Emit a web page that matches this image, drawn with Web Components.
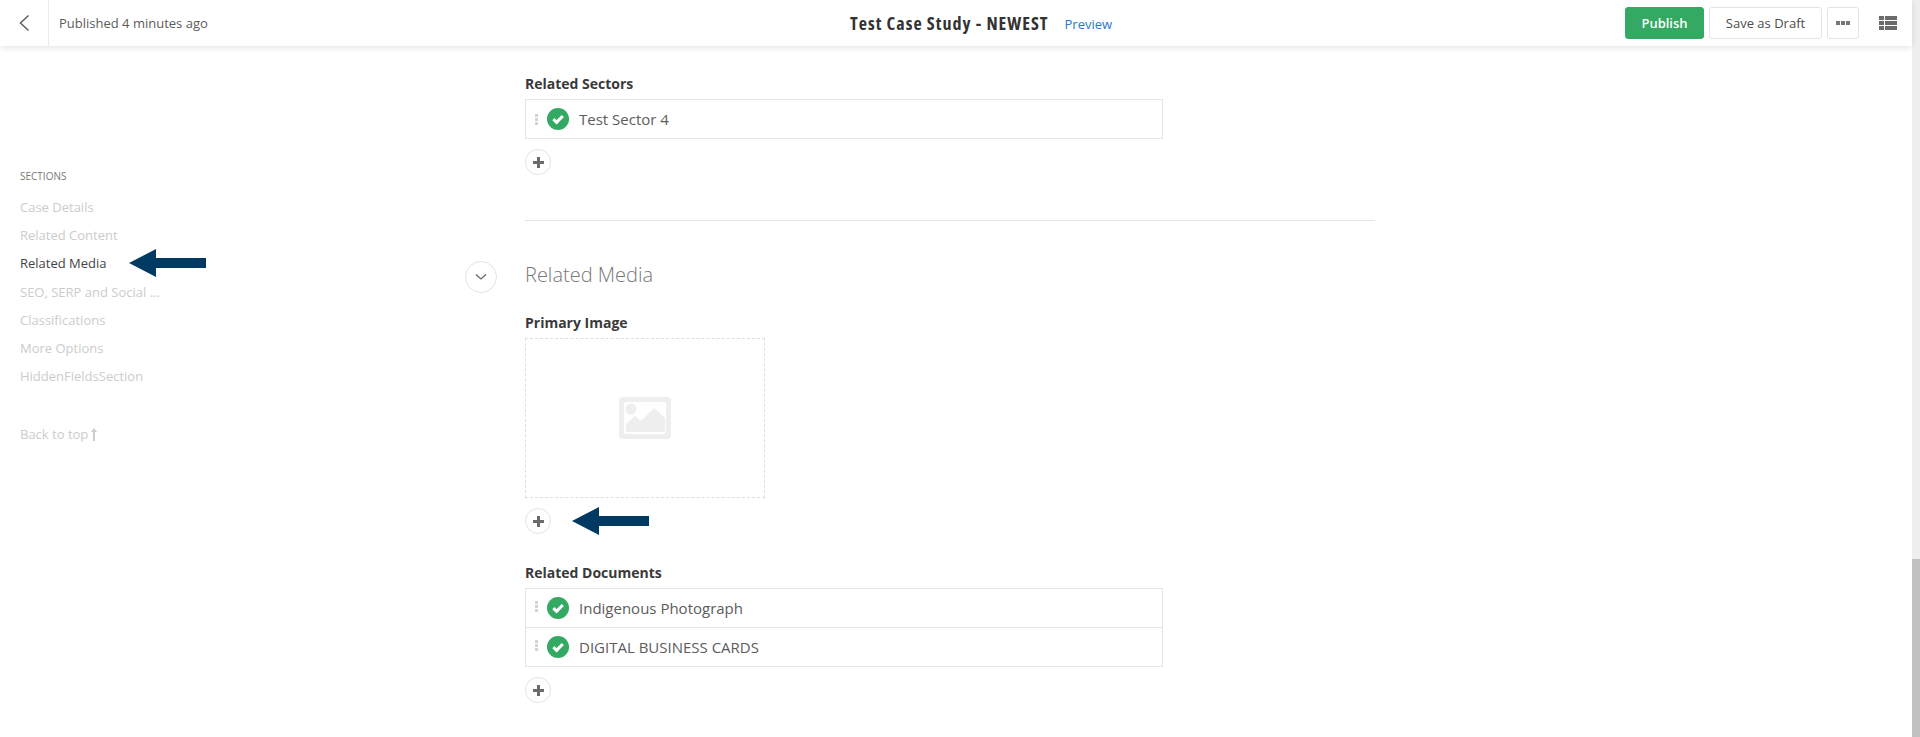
<!DOCTYPE html>
<html lang="en"><head><meta charset="utf-8"><title>Test Case Study</title>
<style>
html,body{margin:0;padding:0;height:737px;overflow:hidden;background:#fff}
body{font-family:"Open Sans",sans-serif;color:#333;display:block}
</style></head><body>
<x-app>
  <x-topbar slot="top" status="Published 4 minutes ago" heading="Test Case Study - NEWEST"></x-topbar>
  <x-sidenav slot="nav"></x-sidenav>
  <x-field label="Related Sectors" style="margin-top:29px">
    <x-list><x-row>Test Sector 4</x-row></x-list>
    <x-add></x-add>
  </x-field>
  <x-divider></x-divider>
  <x-section-head>Related Media</x-section-head>
  <x-field label="Primary Image" style="margin-top:21px">
    <x-image-drop></x-image-drop>
    <x-add><x-arrow style="margin-left:21px"></x-arrow></x-add>
  </x-field>
  <x-field label="Related Documents" style="margin-top:30px">
    <x-list style="--dy:-3px"><x-row>Indigenous Photograph</x-row><x-row>DIGITAL BUSINESS CARDS</x-row></x-list>
    <x-add></x-add>
  </x-field>
</x-app>
<script>
function def(name,html,extra){
  customElements.define(name,class extends HTMLElement{
    constructor(){super();this.attachShadow({mode:'open'}).innerHTML=typeof html==='function'?html(this):html;}
    connectedCallback(){if(extra)extra(this);}
  });
}
def('x-app',`<style>
:host{display:grid;grid-template-columns:1fr 8px;grid-template-rows:46px 1fr;width:1920px;height:737px;overflow:hidden}
.top{grid-column:1;grid-row:1;position:relative;z-index:2}
.bar{grid-column:2;grid-row:1/3;display:flex;flex-direction:column;background:#eeeeee}
.bar i{display:block;margin-top:auto;height:178px;background:#c1c1c1}
.body{grid-column:1;grid-row:2;display:grid;grid-template-columns:465px 60px 850px;align-content:start}
.nav{grid-column:1;grid-row:1}
.main{grid-column:3;grid-row:1;min-width:0}
</style>
<div class="top"><slot name="top"></slot></div>
<div class="bar"><i></i></div>
<div class="body"><div class="nav"><slot name="nav"></slot></div><div class="main"><slot></slot></div></div>`);

def('x-topbar',h=>`<style>
:host{display:flex;align-items:center;height:46px;background:#fff;box-shadow:0 2px 6px rgba(0,0,0,.1);padding-right:15px;box-sizing:border-box}
.back{width:48px;height:46px;border-right:1px solid #ececec;display:flex;align-items:center;justify-content:center;box-sizing:content-box;flex:none}
.status{margin-left:10px;font-size:13px;color:#5c5c5c;width:791px;flex:none;white-space:nowrap}
h1{margin:0;font:700 18px "Open Sans",sans-serif;font-stretch:75%;letter-spacing:1px;color:#333;white-space:nowrap}
a{margin-left:16px;font-size:13px;color:#1f77d8;text-decoration:none;position:relative;top:1px}
.right{margin-left:auto;display:flex;align-items:center;gap:5px}
button{font:13px "Open Sans",sans-serif;height:32px;border-radius:3px;border:1px solid #e3e3e3;background:#fff;color:#4c4c4c;padding:0;box-sizing:border-box}
.pub{width:79px;background:#34a963;border-color:#34a963;color:#fff;font-weight:600}
.draft{width:113px}
.more{width:32px;display:flex;align-items:center;justify-content:center}
.grid{margin-left:15px;display:block}
</style>
<div class="back"><svg width="12" height="18" viewBox="0 0 12 18"><path d="M10.5 1.5 2.5 9l8 7.5" fill="none" stroke="#666" stroke-width="1.6"/></svg></div>
<span class="status">${h.getAttribute('status')}</span>
<h1>${h.getAttribute('heading')}</h1>
<a href="#">Preview</a>
<div class="right">
<button class="pub">Publish</button><button class="draft">Save as Draft</button>
<button class="more"><svg width="14" height="4" viewBox="0 0 14 4"><path d="M0 0h4v4H0zM5 0h4v4H5zM10 0h4v4h-4z" fill="#777"/></svg></button>
<svg class="grid" width="18" height="14" viewBox="0 0 18 14"><path d="M0 0h5v4H0zM6 0h12v4H6zM0 5h5v4H0zM6 5h12v4H6zM0 10h5v4H0zM6 10h12v4H6z" fill="#6b6b6b"/></svg>
</div>`);

def('x-sidenav',`<style>
:host{display:block;padding:122px 0 0 20px;font-size:13px;color:#ccc}
.h{font-size:10px;color:#777;line-height:16px;margin-bottom:9px}
.i{height:28.2px;line-height:28px;white-space:nowrap;display:flex;align-items:center}
.on{color:#444}
.top{margin-top:30px;display:flex;align-items:center;gap:3px;line-height:28px}
x-arrow{margin-left:22px}
</style>
<div class="h">SECTIONS</div>
<div class="i">Case Details</div><div class="i">Related Content</div>
<div class="i on">Related Media<x-arrow></x-arrow></div>
<div class="i">SEO, SERP and Social ...</div><div class="i">Classifications</div><div class="i">More Options</div><div class="i">HiddenFieldsSection</div>
<div class="top">Back to top<svg width="6" height="13" viewBox="0 0 6 13"><path d="M3 0 6 4H4v9H2V4H0z" fill="#ccc"/></svg></div>`);

def('x-arrow',`<style>
:host{display:inline-block;width:77px;height:28px;margin:-2px 0;flex:none}
svg{display:block}
</style><svg width="77" height="28" viewBox="0 0 77 28"><path d="M0 14 27 0v9h50v10H27v9z" fill="#003a63"/></svg>`);

def('x-field',h=>`<style>
:host{display:block}
.l{font-size:14px;font-weight:700;color:#3a3a3a;line-height:18px;margin-bottom:6px}
</style><div class="l">${h.getAttribute('label')}</div><slot></slot>`);

def('x-list',`<style>
:host{display:block;width:638px;border:1px solid #e6e6e6;box-sizing:border-box}
::slotted(x-row:not(:last-child)){border-bottom:1px solid #e6e6e6}
</style><slot></slot>`);

def('x-row',`<style>
:host{display:flex;align-items:center;height:38px;box-sizing:content-box;font-size:15px;color:#5c5c5c;white-space:nowrap}
.d{width:3px;margin:var(--dy,0px) 0 0 9px;display:flex;flex-direction:column;gap:1px}
.d i{display:block;height:3px;background:#d4d4d4}
svg{margin:0 10px 0 9px;display:block}
</style><div class="d"><i></i><i></i><i></i></div>
<svg width="22" height="22" viewBox="0 0 22 22"><circle cx="11" cy="11" r="11" fill="#34a963"/><path d="M6.3 11.2 9.6 14.4 15.8 8" fill="none" stroke="#fff" stroke-width="3"/></svg><slot></slot>`);

def('x-add',`<style>
:host{display:flex;align-items:center;margin-top:10px}
.b{width:26px;height:26px;border:1px solid #e3e3e3;border-radius:50%;box-sizing:border-box;display:flex;align-items:center;justify-content:center;background:#fff;flex:none}
</style><div class="b"><svg width="11" height="11" viewBox="0 0 11 11"><path d="M4 0h3v4h4v3H7v4H4V7H0V4h4z" fill="#6b6b6b"/></svg></div><slot></slot>`);

def('x-divider',`<style>:host{display:block;height:1px;background:#e6e6e6;margin-top:45px}</style>`);

def('x-section-head',`<style>
:host{display:flex;align-items:center;margin:40px 0 0 -60px;height:32px}
.b{width:32px;height:32px;border:1px solid #e3e3e3;border-radius:50%;box-sizing:border-box;display:flex;align-items:center;justify-content:center;margin-right:28px;flex:none}
.t{font-size:20px;font-weight:300;color:#777;white-space:nowrap;padding-bottom:5px}
</style><div class="b"><svg width="12" height="8" viewBox="0 0 12 8"><path d="M1 1.5 6 6l5-4.5" fill="none" stroke="#666" stroke-width="1.3"/></svg></div><div class="t"><slot></slot></div>`);

def('x-image-drop',`<style>
:host{display:flex;align-items:center;justify-content:center;width:240px;height:160px;border:1px dashed #dedede;box-sizing:border-box}
</style><svg width="52" height="42" viewBox="0 0 52 42"><path fill-rule="evenodd" d="M4 0h44a4 4 0 0 1 4 4v34a4 4 0 0 1-4 4H4a4 4 0 0 1-4-4V4a4 4 0 0 1 4-4zM7 5a2 2 0 0 0-2 2v28a2 2 0 0 0 2 2h38a2 2 0 0 0 2-2V7a2 2 0 0 0-2-2z" fill="#eee"/><circle cx="12" cy="12" r="5.5" fill="#eee"/><path d="M7 35V27l9-8 6 5 13-13 11 10v14z" fill="#eee"/></svg>`);
</script>
</body></html>
